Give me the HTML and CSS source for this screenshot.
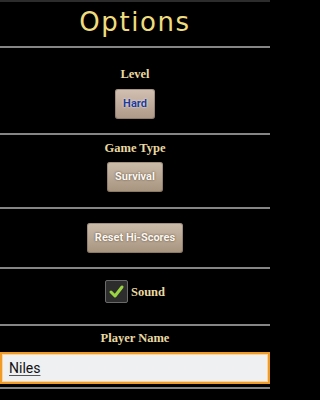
FILE: index.html
```
<!DOCTYPE html>
<html>
<head>
<meta charset="utf-8">
<link rel="stylesheet" href="styles.css">
</head>
<body>
<div class="page">
  <div class="title">Options</div>
  <div class="rule"></div>
  <div class="section level">
    <div class="label">Level</div>
    <div class="btn btn-hard">Hard</div>
  </div>
  <div class="rule"></div>
  <div class="section gametype">
    <div class="label">Game Type</div>
    <div class="btn">Survival</div>
  </div>
  <div class="rule"></div>
  <div class="section reset">
    <div class="btn">Reset Hi-Scores</div>
  </div>
  <div class="rule"></div>
  <div class="section sound">
    <div class="check-row">
      <div class="checkbox">
        <svg width="21" height="21" viewBox="0 0 21 21"><path d="M5 11 L9 15 L16 6" fill="none" stroke="#9ad443" stroke-width="3" stroke-linecap="round" stroke-linejoin="round"/></svg>
      </div>
      <div class="label">Sound</div>
    </div>
  </div>
  <div class="rule"></div>
  <div class="section player">
    <div class="label">Player Name</div>
    <div class="field"><span class="field-text">Niles</span></div>
  </div>
  <div class="rule"></div>
</div>
</body>
</html>
```
FILE: styles.css
```
html, body {
  margin: 0;
  padding: 0;
  background: #000;
}
.page {
  width: 270px;
  height: 400px;
  border-top: 2px solid #2c2c2c;
  box-sizing: border-box;
  display: flex;
  flex-direction: column;
}
.title {
  height: 44px;
  line-height: 41px;
  text-align: center;
  font-family: "DejaVu Sans", sans-serif;
  font-size: 26px;
  letter-spacing: 1.6px;
  color: #efdc7e;
}
.rule {
  height: 2px;
  background: #858585;
  flex: none;
}
.section {
  display: flex;
  flex-direction: column;
  align-items: center;
  box-sizing: border-box;
  flex: none;
}
.label {
  font-family: "Liberation Serif", serif;
  font-weight: bold;
  font-size: 12.5px;
  line-height: 14px;
  color: #e9d9a2;
}
.btn {
  height: 30px;
  line-height: 30px;
  padding: 0 8px;
  box-sizing: border-box;
  border-radius: 3px;
  background: linear-gradient(#cbbcaa, #a7947f);
  box-shadow: inset 0 0 0 1px rgba(90, 70, 50, 0.35);
  font-family: Roboto, sans-serif;
  font-weight: bold;
  font-size: 11px;
  color: #fbf7f2;
  text-shadow: 0 0 2px rgba(60, 40, 20, 0.8);
}
.btn-hard {
  color: #1d3a9c;
  text-shadow: 0 0 2px rgba(255, 255, 255, 0.9);
  background: linear-gradient(#d2c0b2, #ae9887);
}
.level {
  height: 85px;
  padding-top: 19px;
  gap: 8px;
}
.gametype {
  height: 72px;
  padding-top: 6px;
  gap: 7px;
}
.reset {
  height: 58px;
  padding-top: 14px;
}
.sound {
  height: 55px;
  padding-top: 11px;
}
.check-row {
  display: flex;
  align-items: center;
  gap: 3px;
}
.checkbox {
  width: 23px;
  height: 23px;
  box-sizing: border-box;
  border: 1px solid #6a6a6a;
  border-radius: 2px;
  background: #2d2d2d;
}
.checkbox svg {
  display: block;
}
.player {
  height: 61px;
  padding-top: 5px;
  gap: 7px;
}
.field {
  align-self: stretch;
  height: 32px;
  box-sizing: border-box;
  border: 2px solid #f09a28;
  box-shadow: inset 0 0 0 1px #fbd49c;
  background: #eef0f2;
  display: flex;
  align-items: center;
  padding-left: 7px;
}
.field-text {
  font-family: Roboto, sans-serif;
  font-size: 14px;
  color: #111;
  text-decoration: underline;
  text-decoration-color: #555;
  text-underline-offset: 2px;
}
```
